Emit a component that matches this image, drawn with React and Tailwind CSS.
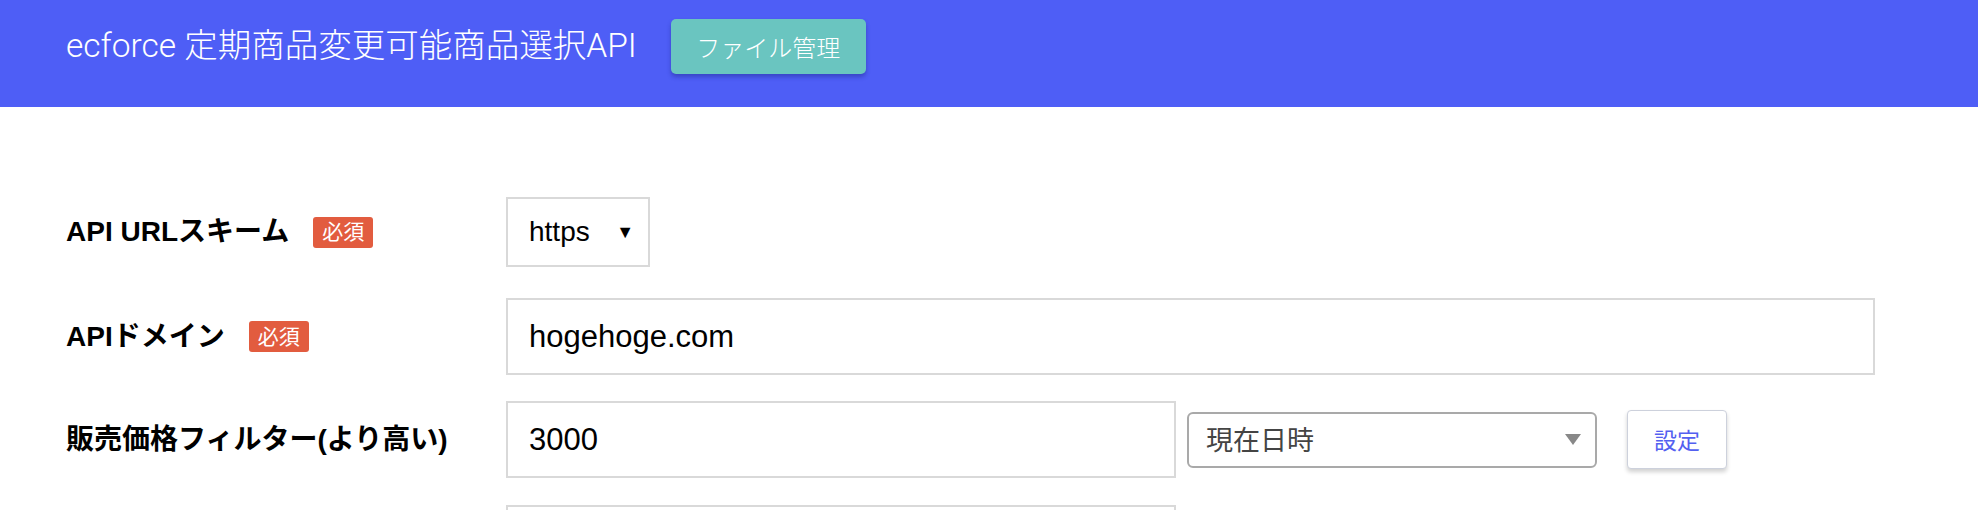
const Required = () => (
  <span className="ml-[24px] inline-flex h-[31px] w-[60px] items-center justify-center rounded-[3px] bg-[#e25c3f] text-[21px] font-normal text-white">
    必須
  </span>
);

const Label = ({ children, required }) => (
  <div className="flex w-[440px] shrink-0 items-center text-[28px] font-bold text-black">
    <span>{children}</span>
    {required && <Required />}
  </div>
);

const App = () => {
  return (
    <div className="min-h-[510px] bg-white font-['Liberation_Sans','Noto_Sans_CJK_JP',sans-serif]">
      <header className="flex h-[107px] items-start bg-[#4e5ef6] pl-[66px] pt-[19px]">
        <div className="flex h-[55px] items-center">
          <h1 className="font-['Roboto','Noto_Sans_CJK_JP',sans-serif] text-[33.5px] font-light text-white">
            ecforce 定期商品変更可能商品選択API
          </h1>
          <button
            type="button"
            className="ml-[34px] h-[55px] w-[195px] rounded-[5px] bg-[#6ac5c0] font-['Noto_Sans_CJK_JP',sans-serif] text-[24px] font-light text-white shadow-[0_3px_4px_rgba(30,40,140,0.45)]"
          >
            ファイル管理
          </button>
        </div>
      </header>

      <form className="flex flex-col pl-[66px] pt-[90px]">
        <div className="mb-[31px] flex items-center">
          <Label required>API URLスキーム</Label>
          <div className="flex h-[70px] w-[144px] items-center justify-between border-2 border-[#d9d9d9] pl-[21px] pr-[14px] text-[28px] text-black">
            <span>https</span>
            <span className="text-[18px]">▼</span>
          </div>
        </div>

        <div className="mb-[26px] flex items-center">
          <Label required>APIドメイン</Label>
          <input
            type="text"
            readOnly
            value="hogehoge.com"
            className="h-[77px] w-[1369px] border-2 border-[#d9d9d9] px-[21px] text-[31px] text-black outline-none"
          />
        </div>

        <div className="mb-[27px] flex items-center">
          <Label>販売価格フィルター(より高い)</Label>
          <input
            type="text"
            readOnly
            value="3000"
            className="h-[77px] w-[670px] border-2 border-[#d9d9d9] px-[21px] text-[31px] text-black outline-none"
          />
          <div className="ml-[11px] flex h-[56px] w-[410px] items-center justify-between rounded-[6px] border-2 border-[#a9a9a9] pl-[17px] pr-[14px] font-['Noto_Sans_CJK_JP',sans-serif] text-[27px] text-[#444]">
            <span>現在日時</span>
            <span className="h-0 w-0 border-x-[8px] border-t-[11px] border-x-transparent border-t-[#888]" />
          </div>
          <button
            type="button"
            className="ml-[30px] h-[59px] w-[100px] rounded-[4px] border border-[#cdd1dc] bg-white font-['Noto_Sans_CJK_JP',sans-serif] text-[23px] text-[#5360f0] shadow-[0_3px_4px_rgba(0,0,0,0.18)]"
          >
            設定
          </button>
        </div>

        <div className="flex items-center">
          <Label></Label>
          <input
            type="text"
            readOnly
            className="h-[77px] w-[670px] border-2 border-[#d9d9d9] px-[21px] text-[31px] outline-none"
          />
        </div>
      </form>
    </div>
  );
};

export default App;
